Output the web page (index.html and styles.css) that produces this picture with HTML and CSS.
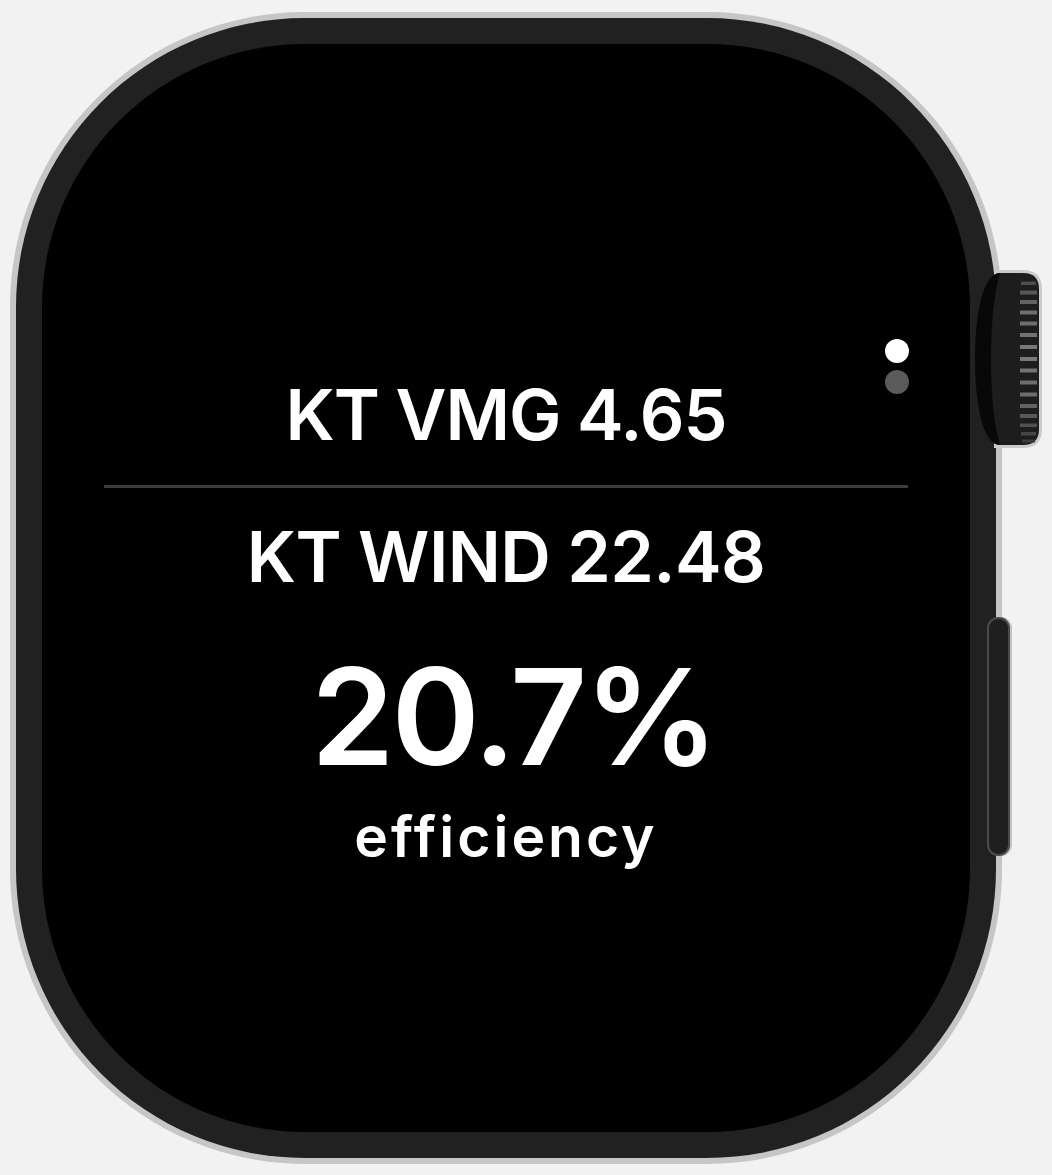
FILE: index.html
```html
<!DOCTYPE html>
<html lang="en">
<head>
<meta charset="utf-8">
<title>VMG Efficiency</title>
<link rel="stylesheet" href="styles.css">
</head>
<body>
<div class="stage">
  <div class="watch">
    <div class="case">
      <div class="bezel">
        <div class="screen">
          <div class="pager">
            <span class="dot dot-active"></span>
            <span class="dot"></span>
          </div>
          <div class="metric metric-vmg">KT VMG 4.65</div>
          <div class="divider"></div>
          <div class="metric metric-wind">KT WIND 22.48</div>
          <div class="big-value">20.7%</div>
          <div class="caption">efficiency</div>
        </div>
      </div>
    </div>
    <svg class="crown" width="84" height="200" viewBox="0 0 84 200" aria-hidden="true">
      <path d="M34 12.5 H63 Q79.5 12.5 79.5 29 V169 Q79.5 185.5 63 185.5 H34" fill="none" stroke="#cbcbcb" stroke-width="5"/>
      <path d="M40 13 H63 Q79 13 79 29 V169 Q79 185 63 185 H40 C22 185 15 140 15 99 C15 58 22 13 40 13 Z" fill="#1d1d1d"/>
      <path d="M40 13 C22 13 15 58 15 99 C15 140 22 185 40 185 C34 165 31 135 31 99 C31 63 34 33 40 13 Z" fill="#080808"/>
      <g fill="#6e6e6e">
        <rect x="61" y="21.5" width="15" height="3.5" fill="#4d4d4d"/>
        <rect x="60" y="30.5" width="17" height="4" fill="#585858"/>
        <rect x="60" y="40" width="17" height="4" fill="#626262"/>
        <rect x="60" y="50.5" width="17" height="4"/>
        <rect x="60" y="61.5" width="17" height="4"/>
        <rect x="60" y="73" width="17" height="4" fill="#747474"/>
        <rect x="60" y="85" width="17" height="4" fill="#787878"/>
        <rect x="60" y="97" width="17" height="4" fill="#787878"/>
        <rect x="60" y="108.5" width="17" height="4" fill="#747474"/>
        <rect x="60" y="120.5" width="17" height="4"/>
        <rect x="60" y="132.5" width="17" height="4"/>
        <rect x="60" y="144" width="17" height="4" fill="#626262"/>
        <rect x="60" y="154" width="17" height="4" fill="#585858"/>
        <rect x="60" y="163.5" width="17" height="3.5" fill="#505050"/>
        <rect x="61" y="172" width="15" height="3.5" fill="#464646"/>
        <rect x="62" y="179.5" width="13" height="3" fill="#3c3c3c"/>
      </g>
    </svg>
    <div class="side-button"></div>
  </div>
</div>
</body>
</html>
```

FILE: styles.css
```css
html, body {
  margin: 0;
  padding: 0;
  background: #f2f2f2;
}

body {
  width: 1052px;
  height: 1175px;
  overflow: hidden;
  font-family: Inter, "Noto Sans", "Liberation Sans", sans-serif;
}

.stage {
  padding: 12px 0 0 10px;
}

.watch {
  position: relative;
  width: 992px;
  height: 1152px;
}

.case {
  width: 992px;
  height: 1152px;
  box-sizing: border-box;
  padding: 6px;
  border-radius: 295px;
  background: #c6c6c6;
  position: relative;
  z-index: 1;
}

.bezel {
  height: 100%;
  box-sizing: border-box;
  padding: 26px;
  border-radius: 289px;
  background: #212121;
}

.screen {
  position: relative;
  height: 100%;
  border-radius: 263px;
  background: #000;
  color: #fff;
  display: flex;
  flex-direction: column;
  align-items: center;
  padding-top: 335px;
  box-sizing: border-box;
}

.pager {
  position: absolute;
  left: 843px;
  top: 295px;
  display: flex;
  flex-direction: column;
  gap: 7px;
}

.dot {
  width: 24px;
  height: 24px;
  border-radius: 50%;
  background: #5a5a5a;
}

.dot-active {
  background: #fff;
}

.metric {
  font-weight: 600;
  white-space: nowrap;
}

.metric-vmg {
  font-size: 70px;
  line-height: 71px;
  letter-spacing: -1px;
}

.divider {
  align-self: stretch;
  margin: 35px 62px 0 62px;
  height: 3px;
  background: #3d3d3d;
}

.metric-wind {
  font-size: 70px;
  line-height: 70px;
  margin-top: 34px;
  letter-spacing: -0.6px;
}

.big-value {
  font-size: 134px;
  line-height: 138px;
  font-weight: 600;
  margin-top: 55px;
  margin-left: 15px;
  letter-spacing: -3px;
  white-space: nowrap;
}

.caption {
  font-size: 57px;
  line-height: 57px;
  font-weight: 600;
  margin-top: 23px;
  letter-spacing: 3px;
}

.crown {
  position: absolute;
  left: 950px;
  top: 248px;
  z-index: 2;
}

.side-button {
  position: absolute;
  left: 977px;
  top: 605px;
  width: 19px;
  height: 235px;
  border: 2px solid #4a4a4a;
  border-radius: 11px;
  background: #1f1f1f;
  box-shadow: 2px 0 0 #c2c2c2;
  z-index: 2;
}
```
